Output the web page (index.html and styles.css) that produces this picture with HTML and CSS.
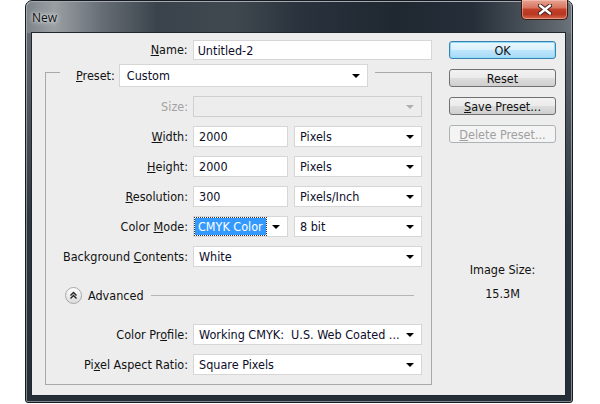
FILE: index.html
```html
<!DOCTYPE html>
<html lang="en">
<head>
    <meta charset="UTF-8">
    <meta name="viewport" content="width=device-width, initial-scale=1.0">
    <title>New</title>
    <link rel="stylesheet" href="styles.css">
</head>
<body>
    <div class="window">
        <div class="window-inner">
            <div class="titlebar">
                <span class="title">New</span>
                <div class="close">
                    <svg width="14" height="11" viewBox="0 0 14 11">
                        <path d="M2 1.5 L12 9.5 M12 1.5 L2 9.5" stroke="#3a1e18" stroke-width="4.2" stroke-linecap="round"/>
                        <path d="M2 1.5 L12 9.5 M12 1.5 L2 9.5" stroke="#fff" stroke-width="2.4" stroke-linecap="round"/>
                    </svg>
                </div>
            </div>
            <div class="content">
                <div class="form">
                    <div class="row name-row">
                        <span class="lbl name-lbl"><u>N</u>ame:</span>
                        <div class="field name-field">Untitled-2</div>
                    </div>
                    <div class="group">
                        <div class="group-head">
                            <span class="edge edge-left"></span>
                            <div class="legend">
                                <span class="lbl"><u>P</u>reset:</span>
                                <div class="field select preset">Custom<span class="arrow"></span></div>
                            </div>
                            <span class="edge edge-right"></span>
                        </div>
                        <div class="group-body">
                            <div class="row">
                                <span class="lbl off">Size:</span>
                                <div class="field select full disabled"><span class="arrow grey"></span></div>
                            </div>
                            <div class="row">
                                <span class="lbl"><u>W</u>idth:</span>
                                <div class="field small">2000</div>
                                <div class="field select unit">Pixels<span class="arrow"></span></div>
                            </div>
                            <div class="row">
                                <span class="lbl"><u>H</u>eight:</span>
                                <div class="field small">2000</div>
                                <div class="field select unit">Pixels<span class="arrow"></span></div>
                            </div>
                            <div class="row">
                                <span class="lbl"><u>R</u>esolution:</span>
                                <div class="field small">300</div>
                                <div class="field select unit">Pixels/Inch<span class="arrow"></span></div>
                            </div>
                            <div class="row">
                                <span class="lbl">Color <u>M</u>ode:</span>
                                <div class="field select small focus"><span class="hl">CMYK Color</span><span class="arrow"></span></div>
                                <div class="field select unit">8 bit<span class="arrow"></span></div>
                            </div>
                            <div class="row">
                                <span class="lbl">Background <u>C</u>ontents:</span>
                                <div class="field select full">White<span class="arrow"></span></div>
                            </div>
                            <div class="advanced">
                                <span class="adv-btn">
                                    <svg width="9" height="9" viewBox="0 0 9 9">
                                        <path d="M1.5 4.5 L4.5 1.5 L7.5 4.5 M1.5 7.5 L4.5 4.5 L7.5 7.5" fill="none" stroke="#222" stroke-width="1.4"/>
                                    </svg>
                                </span>
                                <span class="adv-text">Advanced</span>
                                <span class="adv-line"></span>
                            </div>
                            <div class="row">
                                <span class="lbl">Color Pr<u>o</u>file:</span>
                                <div class="field select full">Working CMYK:&nbsp; U.S. Web Coated ...<span class="arrow"></span></div>
                            </div>
                            <div class="row">
                                <span class="lbl">Pi<u>x</u>el Aspect Ratio:</span>
                                <div class="field select full">Square Pixels<span class="arrow"></span></div>
                            </div>
                        </div>
                    </div>
                </div>
                <div class="side">
                    <div class="btn default">OK</div>
                    <div class="btn">Reset</div>
                    <div class="btn"><span><u>S</u>ave Preset...</span></div>
                    <div class="btn disabled"><span><u>D</u>elete Preset...</span></div>
                    <div class="info">Image Size:</div>
                    <div class="info size">15.3M</div>
                </div>
            </div>
        </div>
    </div>
</body>
</html>
```

FILE: styles.css
```css
body{
    margin: 0;
    background-color: #fff;
    font-family: "DejaVu Sans Condensed", "DejaVu Sans", sans-serif;
    font-stretch: condensed;
    font-size: 12.5px;
    color: #111;
}
.window{
    margin-left: 25px;
    width: 548px;
    height: 403px;
    box-sizing: border-box;
    border: 1px solid #151b21;
    border-radius: 7px 7px 3px 3px;
    background: linear-gradient(to bottom, #6a7177 0px, #535a61 90px, #2d353e 220px, #252d36 403px);
}
.window-inner{
    height: 100%;
    box-sizing: border-box;
    border: 1px solid rgba(220, 226, 232, 0.5);
    border-radius: 6px 6px 2px 2px;
    display: flex;
    flex-direction: column;
    background: linear-gradient(to right, #7d848a 0%, #9a9fa3 5%, #656c73 14%, #3a434c 24%, #40484f 38%, #2a333d 50%, #1f2831 68%, #262f39 82%, #555d65 95%, #6b7279 100%);
    background-size: 100% 31px;
    background-repeat: no-repeat;
}
.titlebar{
    height: 30px;
    display: flex;
    justify-content: space-between;
    align-items: flex-start;
    padding-left: 5px;
}
.title{
    margin-top: 7px;
    font-family: "Open Sans", "DejaVu Sans", sans-serif;
    font-stretch: normal;
    font-size: 12px;
    color: #111;
    text-shadow: 0 0 6px #e8ecef, 0 0 3px #e8ecef;
}
.close{
    margin-top: -2px;
    margin-right: 3px;
    width: 47px;
    height: 20px;
    box-sizing: border-box;
    border: 1px solid #3b1d17;
    border-top: none;
    border-radius: 0 0 5px 5px;
    background: linear-gradient(to bottom, #e7a493 0%, #d87660 40%, #c2412a 50%, #b8361f 75%, #d66a4f 100%);
    box-shadow: inset 0 0 0 1px rgba(255, 210, 200, 0.45);
    display: flex;
    align-items: center;
    justify-content: center;
}
.content{
    flex: 1;
    margin: 0 5px 5px 4px;
    border: 1px solid #20272e;
    background-color: #ededed;
    display: flex;
}
.form{
    width: 387px;
    padding: 7px 0 0 13px;
}
.row{
    display: flex;
    align-items: stretch;
    height: 21px;
}
.lbl{
    display: block;
    text-align: right;
    line-height: 21px;
    white-space: nowrap;
    color: #111;
}
.lbl.off{
    color: #a2a2a2;
}
.name-row{
    height: 20px;
}
.name-lbl{
    width: 143px;
    margin-right: 5px;
    line-height: 20px;
}
.field{
    display: flex;
    align-items: center;
    box-sizing: border-box;
    background-color: #fff;
    border: 1px solid #d6d6d6;
    padding-left: 5px;
    color: #0d0d2a;
    white-space: nowrap;
}
.name-field{
    width: 240px;
    padding-left: 4px;
}
.group{
    margin-top: 4px;
}
.group-head{
    display: flex;
    height: 23px;
}
.edge{
    margin-top: 8px;
    border-top: 1px solid #a9a9a9;
}
.edge-left{
    width: 14px;
    border-left: 1px solid #a9a9a9;
}
.edge-right{
    flex: 1;
    border-right: 1px solid #a9a9a9;
}
.legend{
    display: flex;
    padding: 0 7px 0 16px;
}
.legend .lbl{
    line-height: 23px;
    margin-right: 4px;
}
.preset{
    width: 249px;
    padding-left: 7px;
}
.select{
    padding-right: 7px;
}
.arrow{
    margin-left: auto;
    width: 0;
    height: 0;
    border-left: 4px solid transparent;
    border-right: 4px solid transparent;
    border-top: 4px solid #000;
}
.arrow.grey{
    border-top-color: #b0b0b0;
}
.group-body{
    border: 1px solid #a9a9a9;
    border-top: none;
    padding: 9px 0 9px 0;
    display: flex;
    flex-direction: column;
    gap: 9px;
}
.group-body .lbl{
    width: 142px;
    margin-right: 5px;
}
.full{
    width: 229px;
}
.small{
    width: 95px;
}
.unit{
    width: 128px;
    margin-left: 6px;
}
.disabled{
    background-color: #ededed;
    border-color: #cfcfcf;
}
.focus{
    padding-left: 1px;
}
.hl{
    background-color: #3399ff;
    color: #fff;
    padding: 0 3px;
    height: 17px;
    line-height: 17px;
    outline: 1px dotted #333;
}
.advanced{
    display: flex;
    align-items: center;
    height: 17px;
    margin: 11px 17px 11px 19px;
}
.adv-btn{
    width: 17px;
    height: 17px;
    box-sizing: border-box;
    border: 1px solid #a7a7a7;
    border-radius: 50%;
    background: linear-gradient(to bottom, #ffffff, #dcdcdc);
    display: flex;
    align-items: center;
    justify-content: center;
}
.adv-text{
    margin-left: 6px;
}
.adv-line{
    flex: 1;
    margin-left: 7px;
    border-top: 1px solid #b5b5b5;
}
.side{
    width: 107px;
    margin-left: 17px;
    padding-top: 8px;
    display: flex;
    flex-direction: column;
    align-items: center;
}
.btn{
    width: 107px;
    height: 18px;
    box-sizing: border-box;
    margin-bottom: 10px;
    border: 1px solid #707070;
    border-radius: 3px;
    background: linear-gradient(to bottom, #f2f2f2 0%, #ebebeb 50%, #dddddd 51%, #cfcfcf 100%);
    display: flex;
    align-items: center;
    justify-content: center;
    color: #111;
}
.btn.default{
    border-color: #3c7fb1;
    background: linear-gradient(to bottom, #eaf6fd 0%, #d9f0fc 50%, #bee6fd 51%, #a7d9f5 100%);
    box-shadow: inset 0 0 0 1px #8fdcf7;
}
.btn.disabled{
    border-color: #adb2b5;
    background: #f4f4f4;
    color: #a0a0a0;
}
.info{
    margin-top: 109px;
    height: 15px;
    line-height: 15px;
}
.info.size{
    margin-top: 9px;
}
```
